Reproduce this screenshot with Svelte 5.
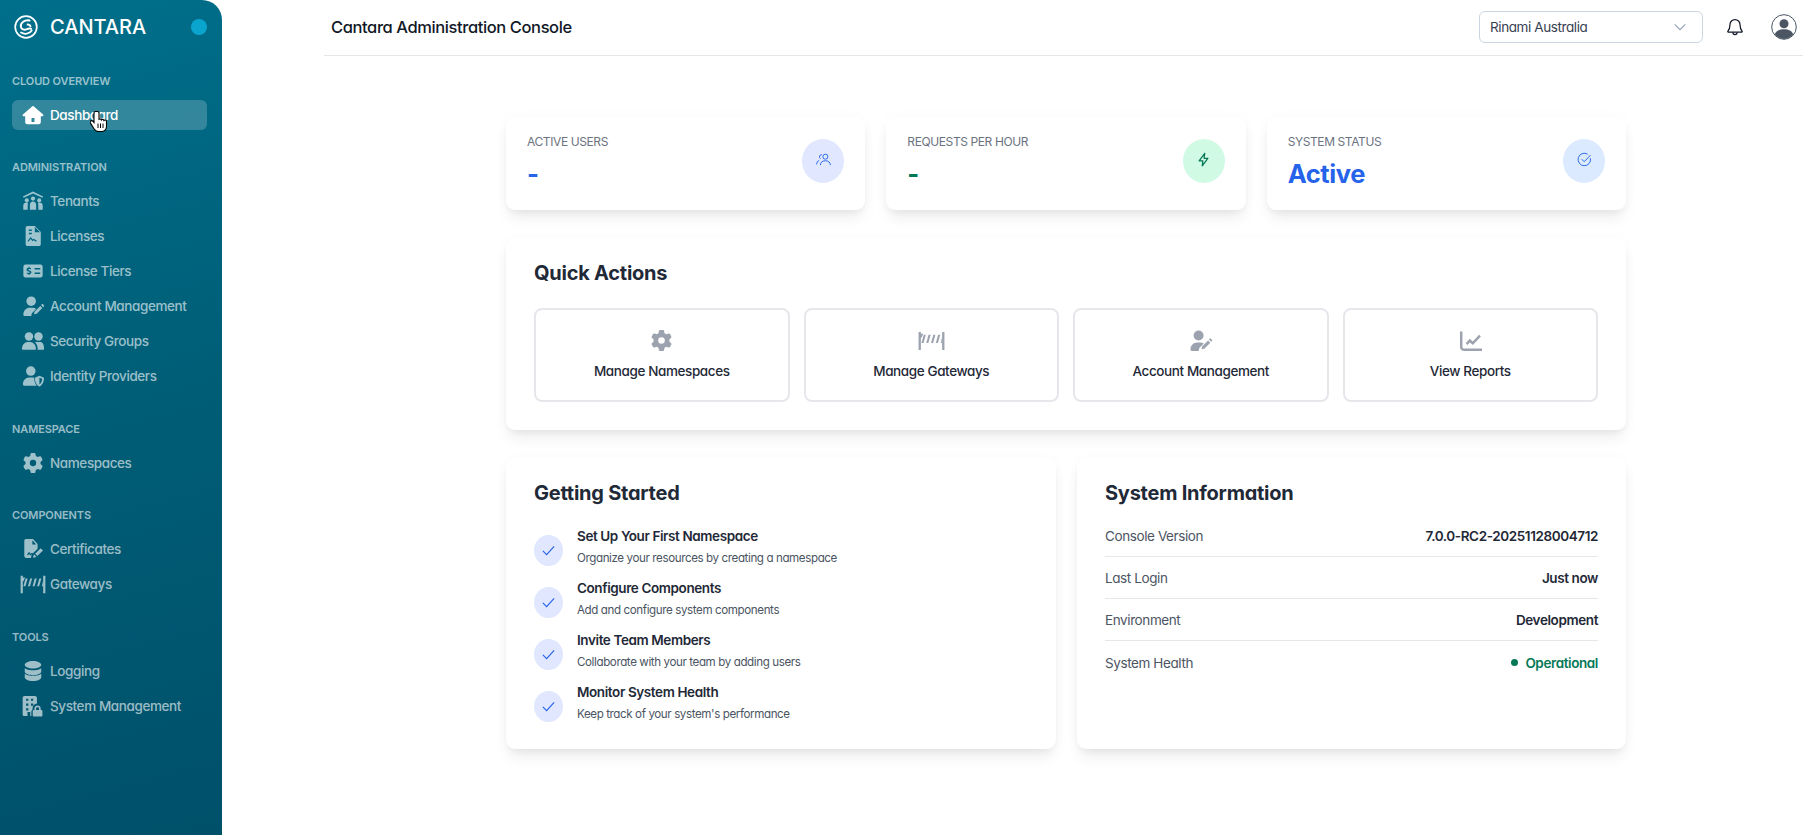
<script>
	const gear =
		'<g transform="translate(1 1) scale(.043)"><path fill-rule="evenodd" d="M495.9 166.6c3.2 8.7 .5 18.4-6.4 24.6l-43.3 39.4c1.1 8.3 1.7 16.8 1.7 25.4s-.6 17.1-1.7 25.4l43.3 39.4c6.9 6.2 9.6 15.9 6.4 24.6c-4.4 11.9-9.7 23.3-15.8 34.3l-4.7 8.1c-6.6 11-14 21.4-22.1 31.2c-5.9 7.2-15.7 9.6-24.5 6.8l-55.7-17.7c-13.4 10.3-28.2 18.9-44 25.4l-12.5 57.1c-2 9.1-9 16.3-18.2 17.8c-13.8 2.3-28 3.5-42.5 3.5s-28.7-1.2-42.5-3.5c-9.2-1.5-16.2-8.7-18.2-17.8l-12.5-57.1c-15.8-6.5-30.6-15.1-44-25.4L83.1 425.9c-8.8 2.8-18.6 .3-24.5-6.8c-8.1-9.8-15.5-20.2-22.1-31.2l-4.7-8.1c-6.1-11-11.4-22.4-15.8-34.3c-3.2-8.7-.5-18.4 6.4-24.6l43.3-39.4C64.6 273.1 64 264.6 64 256s.6-17.1 1.7-25.4L22.4 191.2c-6.9-6.2-9.6-15.9-6.4-24.6c4.4-11.9 9.7-23.3 15.8-34.3l4.7-8.1c6.6-11 14-21.4 22.1-31.2c5.9-7.2 15.7-9.6 24.5-6.8l55.7 17.7c13.4-10.3 28.2-18.9 44-25.4l12.5-57.1c2-9.1 9-16.3 18.2-17.8C227.3 1.2 241.5 0 256 0s28.7 1.2 42.5 3.5c9.2 1.5 16.2 8.7 18.2 17.8l12.5 57.1c15.8 6.5 30.6 15.1 44 25.4l55.7-17.7c8.8-2.8 18.6-.3 24.5 6.8c8.1 9.8 15.5 20.2 22.1 31.2l4.7 8.1c6.1 11 11.4 22.4 15.8 34.3zM256 336a80 80 0 1 0 0-160 80 80 0 1 0 0 160z"/></g>'
	const barrier =
		'<path d="M-1.500 3h2.400v19h-2.400zM23.100 3h2.400v19h-2.400zM.9 5h2.500L1.600 9H.9z"/><path d="m6.100 6-2.400 8.500H1.500L3.900 6zM11.100 6l-2.400 8.500H6.500L8.900 6zM16.100 6l-2.400 8.500h-2.200L13.900 6zM21.100 6l-2.400 8.500h-2.200L18.900 6zM23.100 8v6.500h-1.400z"/>'
	const userPen =
		'<circle cx="10" cy="6.800" r="5.200"/><path d="M1.500 21.500c0-4.600 3.400-7.500 7-7.500h3.200c1.400 0 2.700.4 3.800 1.200l-4.700 4.600-.8 3.200H3c-.9 0-1.500-.7-1.500-1.500z"/><path d="m13 21 .7-2.800 6.200-6.200 2.300 2.300-6.200 6.200zM20.800 11l.8-.8c.4-.4 1-.4 1.400 0l.9.9c.4.4.4 1 0 1.400l-.8.8z"/>'
	const icons = {
		house:
			'<path fill-rule="evenodd" d="M12.700 2.400a1 1 0 0 0-1.400 0L1 11.400c-.8.7-.3 1.900.7 1.900H3.500v6.600c0 1.200 1 2.100 2.100 2.100h12.800c1.200 0 2.100-1 2.100-2.100v-6.600h1.800c1 0 1.500-1.200.7-1.900zM10.400 15.400h3.200v4.300h-3.200z"/>',
		tenants:
			'<path d="M12 1.500 1 7l.8 1.500L12 3.700l10.200 4.800L23 7z"/><circle cx="12" cy="9.400" r="2.300"/><circle cx="5.200" cy="11.200" r="2.200"/><circle cx="18.800" cy="11.200" r="2.200"/><path d="M8.600 21.500v-5.400c0-2 1.400-3.600 3.400-3.600s3.400 1.600 3.400 3.600v5.400zM1.400 21.500v-4.600c0-2 1.500-3.300 3.700-3.300.6 0 1.200.1 1.700.4-.4.700-.6 1.600-.6 2.500v5zM22.600 21.500v-4.600c0-2-1.500-3.300-3.700-3.300-.6 0-1.200.1-1.700.4.400.7.6 1.600.6 2.500v5z"/>',
		license:
			'<path fill-rule="evenodd" d="M6 1h8l6.500 6.500V21c0 1.200-.9 2-2 2H6c-1.100 0-2-.8-2-2V3c0-1.200.9-2 2-2zm1.500 4v1.600h3.200V5zm0 3.400V10h3.200V8.400zm6.500-6.200V8h5.600zM7 18.200l2.400-3 2.300 2.500 1.200-1 2.600 1.600.7-1.100-3.300-2.200-1.100.9-2.400-2.700-3.300 4.200z"/>',
		tiers:
			'<g transform="translate(1.500 1.500) scale(.875)"><path fill-rule="evenodd" d="M2.600 4h18.800A2.600 2.600 0 0 1 24 6.600v11a2.600 2.600 0 0 1-2.600 2.600H2.600A2.600 2.600 0 0 1 0 17.600v-11A2.600 2.600 0 0 1 2.600 4zM14 8.400v1.800h7V8.400zm0 5.600v1.800h7V14zM6.400 6.800v1.300c-1.400.2-2.400 1-2.400 2.200 0 1.400 1.100 1.900 2.400 2.300 1 .3 1.400.5 1.400 1 0 .5-.5.8-1.300.8-.7 0-1.400-.2-2-.6l-.5 1.400c.6.3 1.400.6 2.400.7V17h1.300v-1.100c1.400-.2 2.300-1.100 2.300-2.300 0-1.400-1.100-1.900-2.400-2.300-.9-.3-1.400-.5-1.400-1 0-.4.4-.7 1.100-.7.7 0 1.300.2 1.800.4l.5-1.300c-.5-.3-1.200-.5-1.900-.6V6.800z"/></g>',
		userPen,
		group:
			'<circle cx="7.600" cy="7" r="4.600"/><circle cx="18" cy="7" r="4.600"/><path d="M0 20.600c0-4.400 2.900-7.600 6.200-7.600h2.800c3.300 0 6.200 3.200 6.200 7.600 0 .6-.5 1-1 1H1c-.5 0-1-.4-1-1zM16.800 21.600c.2-.3.3-.6.3-1 0-2.900-1.100-5.600-3-7.400.5-.1 1-.2 1.500-.2H20c2.300 0 4 2.600 4 6.200v1.400c0 .5-.4 1-1 1z"/>',
		userShield:
			'<circle cx="9.600" cy="6.600" r="5.200"/><path d="M1 21c0-4.200 3-7.500 6.600-7.500h3.600c.7 0 1.400.1 2 .3 0 3.100.9 6.200 3 8.700H2.500C1.600 22.500 1 21.800 1 21z"/><path fill-rule="evenodd" d="m19 11.800 5 2c0 4-1.400 8-5 9.700-3.600-1.700-5-5.700-5-9.700zm0 2.100v7.400c1.900-1.200 2.900-3.700 3-6.200z"/>',
		gear,
		cert:
			'<path fill-rule="evenodd" d="M4.500 1h7.500l5 5.500v5.200l-6.500 6.600-.7 3.400H4.500c-1.100 0-2-.8-2-2V3c0-1.200.9-2 2-2zM11.300 2.500V7h4.200zM5.500 18.400l2.200-3.400 1.600 2.200 1.800-1.200.8 1-2.800 2-1.400-1.800-1.200 1.900z"/><path d="m12.500 19 .9-.9 2.500 2.500-3.900 1zM14.300 17.200l6.100-6.100 2.500 2.500-6.100 6.100z"/>',
		barrier,
		database:
			'<path d="M21 5.200C21 7.400 17 9.300 12 9.300S3 7.400 3 5.200 7 1 12 1s9 2 9 4.200zM19 10c.7-.3 1.400-.7 2-1.100v3.700c0 2.200-4 4-9 4s-9-1.800-9-4V8.900c.6.400 1.300.8 2 1.100 1.900.8 4.400 1.200 7 1.200s5.100-.4 7-1.200zM3 14.900c.6.400 1.300.8 2 1.100 1.900.8 4.400 1.200 7 1.200s5.100-.4 7-1.200c.7-.3 1.400-.7 2-1.100v3.900c0 2.200-4 4.200-9 4.200s-9-2-9-4.200z"/>',
		building:
			'<path fill-rule="evenodd" d="M2.800 1h11.400c1.200 0 2.100.9 2.100 2.100v6.300c-2.700.2-4.800 2.500-4.800 5.200v1.600c-.8.500-1.300 1.400-1.300 2.400V23H2.800c-1.200 0-2.100-.9-2.100-2.100V3.100C.7 1.900 1.600 1 2.800 1zM4.500 4v2.400h2.400V4zm5.300 0v2.400h2.400V4zM4.500 9.200v2.400h2.400V9.200zm5.300 0v2.400h2.400V9.200zM4.500 14.400v2.400h2.400v-2.400zM6 18.500V23h3v-4.500z"/>' +
			'<path fill-rule="evenodd" d="M17 11.500c-1.900 0-3.400 1.400-3.400 3.200v1.600h-.5c-.8 0-1.400.6-1.400 1.400v4.400c0 .8.600 1.400 1.400 1.400h7.800c.8 0 1.400-.6 1.400-1.400v-4.400c0-.8-.6-1.400-1.400-1.400h-.5v-1.600c0-1.800-1.500-3.200-3.400-3.200zm0 1.800c.9 0 1.600.6 1.600 1.400v1.600h-3.200v-1.600c0-.8.700-1.400 1.600-1.400z"/>',
		chart:
			'<path d="M1 2.500h2.600v16c0 1 .8 1.900 1.900 1.900H24V23H5.500A4.500 4.500 0 0 1 1 18.500z"/><path d="m7 14.800 4.200-4.500 3.200 2.700 6.500-7 1.900 1.800-8.300 8.900-3.200-2.700-2.600 2.800z"/>',
	}

	const sections = [
		{ title: 'Cloud Overview', items: [{ label: 'Dashboard', icon: 'house', active: true }] },
		{
			title: 'Administration',
			items: [
				{ label: 'Tenants', icon: 'tenants' },
				{ label: 'Licenses', icon: 'license' },
				{ label: 'License Tiers', icon: 'tiers' },
				{ label: 'Account Management', icon: 'userPen' },
				{ label: 'Security Groups', icon: 'group' },
				{ label: 'Identity Providers', icon: 'userShield' },
			],
		},
		{ title: 'Namespace', items: [{ label: 'Namespaces', icon: 'gear' }] },
		{
			title: 'Components',
			items: [
				{ label: 'Certificates', icon: 'cert' },
				{ label: 'Gateways', icon: 'barrier' },
			],
		},
		{
			title: 'Tools',
			items: [
				{ label: 'Logging', icon: 'database' },
				{ label: 'System Management', icon: 'building' },
			],
		},
	]

	const actions = [
		{ label: 'Manage Namespaces', icon: 'gear' },
		{ label: 'Manage Gateways', icon: 'barrier' },
		{ label: 'Account Management', icon: 'userPen' },
		{ label: 'View Reports', icon: 'chart' },
	]

	const steps = [
		{ title: 'Set Up Your First Namespace', text: 'Organize your resources by creating a namespace' },
		{ title: 'Configure Components', text: 'Add and configure system components' },
		{ title: 'Invite Team Members', text: 'Collaborate with your team by adding users' },
		{ title: 'Monitor System Health', text: "Keep track of your system's performance" },
	]

	const info = [
		{ label: 'Console Version', value: '7.0.0-RC2-20251128004712' },
		{ label: 'Last Login', value: 'Just now' },
		{ label: 'Environment', value: 'Development' },
	]
</script>

<div class="app">
	<aside class="sidebar">
		<div class="brand">
			<svg class="logo" viewBox="0 0 24 24" fill="none" stroke="#fff" stroke-linecap="round">
				<circle cx="12" cy="12" r="10.800" stroke-width="1.700" />
				<path d="M15.500 5.500C10.500 4.500 6.500 8 6.800 11.500c.3 3 3.600 3.800 6.200 2.600 1.600-.8 3-1 4.200-.3" stroke-width="2" />
				<path d="M7 17.500c3.500 2.300 8.500 1.500 10.700-2" stroke-width="1.800" />
				<path d="M13.500 9.500c1.500 0 2.700.8 3 2" stroke-width="1.800" />
			</svg>
			<span class="brand-name">CANTARA</span>
			<span class="brand-dot"></span>
		</div>

		{#each sections as section}
			<nav class="section">
				<h3>{section.title}</h3>
				{#each section.items as item}
					<a class="item" class:active={item.active} href="#top">
						<svg class="nav-icon" viewBox="0 0 24 24" fill="currentColor">{@html icons[item.icon]}</svg>
						<span>{item.label}</span>
					</a>
				{/each}
			</nav>
		{/each}

		<svg class="cursor" viewBox="0 0 18 22" aria-hidden="true">
			<path
				d="M5.500 1.500c-.9 0-1.500.7-1.500 1.500v9.500l-1.300-1.400c-.7-.7-1.700-.7-2.200 0-.5.500-.5 1.300 0 2l3.500 5.600c1 1.700 2.500 2.800 5 2.800h2.500c3 0 5-2.200 5-5v-5c0-.9-.6-1.500-1.400-1.500-.5 0-.9.200-1.100.5-.2-.7-.7-1.100-1.400-1.100-.5 0-.9.200-1.200.6-.2-.6-.7-1-1.400-1-.4 0-.7.100-1 .3V3c0-.8-.6-1.500-1.500-1.500z"
				fill="#fff"
				stroke="#000"
				stroke-width="1.100"
			/>
			<path d="M8 13.500v4.500M10.500 13.500v4.500M13 13.500v4.500" stroke="#000" fill="none" />
		</svg>
	</aside>

	<main class="main">
		<header class="topbar">
			<h1>Cantara Administration Console</h1>
			<div class="select">
				<span>Rinami Australia</span>
				<svg viewBox="0 0 16 16" fill="none" stroke="#94a3b8" stroke-width="1.300"><path d="m2 5 6 6 6-6" /></svg>
			</div>
			<svg class="bell" viewBox="0 0 24 24" fill="none" stroke="#111827" stroke-width="1.500">
				<path d="M12 3a6 6 0 0 0-6 6c0 5-1.200 6.600-2.600 8.200-.3.400 0 .8.400.8h16.400c.4 0 .7-.4.400-.8C19.200 15.600 18 14 18 9a6 6 0 0 0-6-6z" />
				<path d="M9.500 18.500a2.500 2.500 0 0 0 5 0" />
			</svg>
			<svg class="avatar" viewBox="0 0 26 26">
				<circle cx="13" cy="13" r="12.300" fill="#fff" stroke="#4b5563" stroke-width="1" />
				<circle cx="13" cy="9.700" r="4.500" fill="#4b5563" />
				<path d="M3.800 20.500c1-3.800 4.700-5.300 9.200-5.300s8.200 1.500 9.200 5.300a11.800 11.800 0 0 1-18.400 0z" fill="#4b5563" />
			</svg>
		</header>

		<div class="content">
			<section class="stats">
				<div class="card stat">
					<div>
						<div class="stat-label">Active Users</div>
						<div class="stat-value blue">-</div>
					</div>
					<span class="stat-icon indigo">
						<svg viewBox="0 0 24 24" fill="none" stroke="#2563eb" stroke-width="1.500">
							<circle cx="15" cy="7.500" r="4" />
							<path d="M7 21c0-4.500 3.400-7 8-7s8 2.500 8 7" />
							<path d="M9.500 4.200A3.500 3.500 0 0 0 7 10.500M5 13.500C2.500 14.500 1 17 1 20" />
						</svg>
					</span>
				</div>
				<div class="card stat">
					<div>
						<div class="stat-label">Requests per Hour</div>
						<div class="stat-value green">-</div>
					</div>
					<span class="stat-icon mint">
						<svg viewBox="0 0 24 24" fill="none" stroke="#047857" stroke-width="2" stroke-linejoin="round">
							<path d="M14 2 5 14h6l-1 8 9-12h-6z" />
						</svg>
					</span>
				</div>
				<div class="card stat">
					<div>
						<div class="stat-label">System Status</div>
						<div class="stat-value blue">Active</div>
					</div>
					<span class="stat-icon sky">
						<svg viewBox="0 0 24 24" fill="none" stroke="#2563eb" stroke-width="1.500">
							<path d="M21.500 10A10 10 0 1 1 17 3.500" />
							<path d="m7.500 11.500 4 4L21.500 5" />
						</svg>
					</span>
				</div>
			</section>

			<section class="card quick">
				<h2>Quick Actions</h2>
				<div class="actions">
					{#each actions as action}
						<button class="action" type="button">
							<svg viewBox="0 0 24 24" fill="currentColor">{@html icons[action.icon]}</svg>
							<span>{action.label}</span>
						</button>
					{/each}
				</div>
			</section>

			<section class="columns">
				<div class="card panel">
					<h2>Getting Started</h2>
					<ul class="steps">
						{#each steps as step}
							<li>
								<span class="check">
									<svg viewBox="0 0 16 16" fill="none" stroke="#2563eb" stroke-width="1.200"><path d="m2 8.500 4 4 8-9" /></svg>
								</span>
								<div>
									<div class="step-title">{step.title}</div>
									<div class="step-text">{step.text}</div>
								</div>
							</li>
						{/each}
					</ul>
				</div>

				<div class="card panel">
					<h2>System Information</h2>
					<dl class="info">
						{#each info as row}
							<div class="info-row">
								<dt>{row.label}</dt>
								<dd>{row.value}</dd>
							</div>
						{/each}
						<div class="info-row">
							<dt>System Health</dt>
							<dd class="ok"><i></i>Operational</dd>
						</div>
					</dl>
				</div>
			</section>
		</div>
	</main>
</div>

<style>
	:global(body) {
		margin: 0;
		background: #fff;
		font-family: Inter, 'Noto Sans', sans-serif;
		font-feature-settings: 'cv11' 1;
		letter-spacing: -0.025em;
		color: #1f2937;
	}

	.app {
		display: flex;
		min-height: 100vh;
	}

	.sidebar {
		position: relative;
		box-sizing: border-box;
		flex: 0 0 222px;
		padding: 0 15px 0 12px;
		background: linear-gradient(165deg, #006f8b 0%, #005d76 50%, #00506a 100%);
		border-top-right-radius: 20px;
	}

	.brand {
		display: flex;
		align-items: center;
		height: 54px;
		margin-bottom: 20px;
		color: #fff;
	}

	.logo {
		width: 24px;
		height: 24px;
		margin-left: 2px;
		flex: none;
	}

	.brand-name {
		margin-left: 12px;
		font-size: 20px;
		font-weight: 500;
		letter-spacing: 0;
	}

	.brand-dot {
		width: 16px;
		height: 16px;
		margin-left: auto;
		border-radius: 50%;
		background: #0aa5cf;
	}

	.section {
		display: flex;
		flex-direction: column;
		gap: 5px;
		margin-bottom: 30.4px;
	}

	.section h3 {
		margin: 0 0 7px;
		font-size: 11px;
		line-height: 14px;
		font-weight: 600;
		letter-spacing: -0.01em;
		text-transform: uppercase;
		color: rgba(255, 255, 255, 0.6);
	}

	.item {
		display: flex;
		align-items: center;
		gap: 6px;
		height: 30px;
		padding-left: 10px;
		border-radius: 6px;
		font-size: 13.5px;
		font-weight: 500;
		text-decoration: none;
		color: rgba(255, 255, 255, 0.62);
	}

	.item.active {
		background: rgba(255, 255, 255, 0.2);
		color: #fff;
	}

	.nav-icon {
		width: 22px;
		height: 22px;
		flex: none;
		overflow: visible;
	}

	.cursor {
		position: absolute;
		left: 90px;
		top: 109px;
		width: 18px;
		height: 24px;
	}

	.main {
		flex: 1;
		min-width: 0;
	}

	.topbar {
		display: flex;
		align-items: center;
		box-sizing: border-box;
		height: 56px;
		margin-left: 102px;
		padding: 0 6px 1px 7px;
		border-bottom: 1px solid #e5e7eb;
	}

	.topbar h1 {
		margin: 0 auto 0 0;
		font-size: 16.5px;
		font-weight: 500;
		color: #111827;
	}

	.select {
		display: flex;
		align-items: center;
		justify-content: space-between;
		box-sizing: border-box;
		width: 224px;
		height: 32px;
		padding: 0 15px 0 10px;
		border: 1px solid #cbd5e1;
		border-radius: 6px;
		font-size: 13.5px;
		color: #374151;
	}

	.select svg {
		width: 14px;
		height: 14px;
	}

	.bell {
		width: 20px;
		height: 20px;
		margin: 0 0 0 22px;
	}

	.avatar {
		width: 26px;
		height: 26px;
		margin-left: 26px;
	}

	.content {
		display: flex;
		flex-direction: column;
		gap: 28px;
		width: 1120px;
		margin: 61px 0 0 284px;
	}

	.card {
		box-sizing: border-box;
		border-radius: 9px;
		background: #fff;
		box-shadow: 0 10px 15px -3px rgba(0, 0, 0, 0.08), 0 4px 6px -2px rgba(0, 0, 0, 0.04),
			0 0 14px rgba(0, 0, 0, 0.025);
	}

	.stats {
		display: grid;
		grid-template-columns: repeat(3, 1fr);
		gap: 21px;
	}

	.stat {
		display: flex;
		align-items: flex-start;
		justify-content: space-between;
		height: 93px;
		padding: 16px 21px 0;
	}

	.stat-label {
		margin-bottom: 7px;
		font-size: 12px;
		line-height: 18px;
		text-transform: uppercase;
		color: #6b7280;
	}

	.stat-value {
		font-size: 25.5px;
		line-height: 32px;
		font-weight: 700;
	}

	.blue {
		color: #2563eb;
	}

	.green {
		color: #047857;
	}

	.stat-icon {
		display: flex;
		align-items: center;
		justify-content: center;
		width: 42px;
		height: 44px;
		margin-top: 6px;
		border-radius: 50%;
	}

	.stat-icon svg {
		width: 15px;
		height: 15px;
		margin-top: -4px;
	}

	.indigo {
		background: #e0e7ff;
	}

	.mint {
		background: #d1fae5;
	}

	.sky {
		background: #dbeafe;
	}

	h2 {
		margin: 0;
		font-size: 20px;
		line-height: 28px;
		font-weight: 650;
		letter-spacing: -0.012em;
		color: #1f2937;
	}

	.quick {
		height: 192px;
		padding: 21px 28px 0;
	}

	.actions {
		display: grid;
		grid-template-columns: repeat(4, 1fr);
		gap: 14px;
		margin-top: 21px;
	}

	.action {
		display: flex;
		flex-direction: column;
		align-items: center;
		gap: 11px;
		height: 94px;
		padding: 19px 0 0;
		border: 2px solid #e5e7eb;
		border-radius: 8px;
		background: #fff;
		font: inherit;
		font-size: 13.5px;
		font-weight: 500;
		letter-spacing: inherit;
		color: #1f2937;
	}

	.action svg {
		width: 23px;
		height: 23px;
		overflow: visible;
		color: #9ca3af;
	}

	.columns {
		display: grid;
		grid-template-columns: 550px 549px;
		gap: 21px;
	}

	.panel {
		height: 291px;
		padding: 21px 28px 0;
	}

	.steps {
		display: flex;
		flex-direction: column;
		gap: 10px;
		margin: 19px 0 0;
		padding: 0;
		list-style: none;
	}

	.steps li {
		display: flex;
		gap: 14px;
		height: 42px;
	}

	.check {
		display: flex;
		align-items: center;
		justify-content: center;
		flex: none;
		width: 29px;
		height: 31px;
		margin-top: 9px;
		border-radius: 50%;
		background: #e0e7ff;
	}

	.check svg {
		width: 15px;
		height: 15px;
	}

	.step-title {
		font-size: 13.5px;
		line-height: 20px;
		font-weight: 600;
		color: #1f2937;
	}

	.step-text {
		margin-top: 3px;
		font-size: 11.6px;
		line-height: 18px;
		color: #4b5563;
	}

	.info {
		margin: 8px 0 0;
	}

	.info-row {
		display: flex;
		justify-content: space-between;
		align-items: center;
		height: 42px;
		box-sizing: border-box;
		border-bottom: 1px solid #e5e7eb;
		font-size: 13.5px;
		padding-top: 1px;
	}

	.info-row:last-child {
		border-bottom: none;
	}

	dt {
		color: #4b5563;
	}

	dd {
		margin: 0;
		font-weight: 600;
		color: #1f2937;
	}

	.ok {
		display: flex;
		align-items: center;
		gap: 7px;
		color: #047857;
	}

	.ok i {
		width: 7px;
		height: 7px;
		border-radius: 50%;
		background: #047857;
	}
</style>
